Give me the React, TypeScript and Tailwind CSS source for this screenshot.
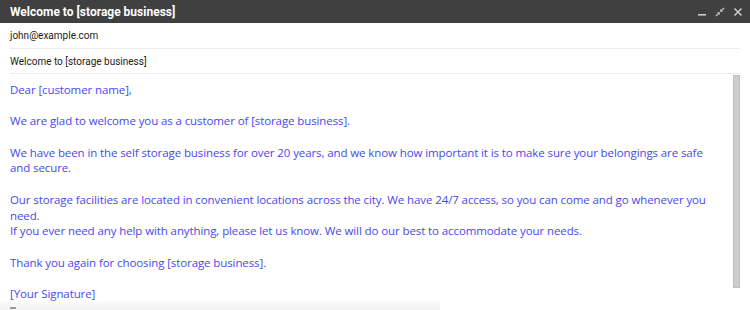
import React from "react";

const lines: (string | null)[] = [
  "Dear [customer name],",
  null,
  "We are glad to welcome you as a customer of [storage business].",
  null,
  "We have been in the self storage business for over 20 years, and we know how important it is to make sure your belongings are safe and secure.",
  null,
  "Our storage facilities are located in convenient locations across the city. We have 24/7 access, so you can come and go whenever you need.",
  "If you ever need any help with anything, please let us know. We will do our best to accommodate your needs.",
  null,
  "Thank you again for choosing [storage business].",
  null,
  "[Your Signature]",
];

export default function App() {
  return (
    <div className="flex h-[310px] w-[750px] flex-col overflow-hidden bg-white font-['Roboto',sans-serif]">
      {/* title bar */}
      <div className="flex h-[23px] shrink-0 items-center justify-between bg-[#404040] pl-[10px] pr-[7px]">
        <span className="text-[12px] font-bold text-white">Welcome to [storage business]</span>
        <div className="flex items-center gap-[8px] text-[#c8c8c8]">
          <svg width="10" height="10" viewBox="0 0 10 10">
            <rect x="1" y="7" width="8" height="1.6" fill="currentColor" />
          </svg>
          <svg width="10" height="10" viewBox="0 0 10 10" fill="currentColor">
            <path d="M9 1 L6.2 3.8" stroke="currentColor" strokeWidth="1.2" />
            <path d="M5.2 1.8 L5.2 4.8 L8.2 4.8 Z" />
            <path d="M1 9 L3.8 6.2" stroke="currentColor" strokeWidth="1.2" />
            <path d="M4.8 8.2 L4.8 5.2 L1.8 5.2 Z" />
          </svg>
          <svg width="10" height="10" viewBox="0 0 10 10">
            <path d="M1.5 1.5 L8.5 8.5 M8.5 1.5 L1.5 8.5" stroke="currentColor" strokeWidth="1.6" />
          </svg>
        </div>
      </div>

      {/* fields */}
      <div className="shrink-0 px-[10px]">
        <div className="flex h-[26px] items-center border-b border-[#ececec] text-[10px] text-[#222]">
          john@example.com
        </div>
        <div className="flex h-[25px] items-center border-b border-[#ececec] text-[10px] text-[#222]">
          Welcome to [storage business]
        </div>
      </div>

      {/* body */}
      <div className="relative flex min-h-0 flex-1">
        <div className="w-[725px] pl-[10px] pt-[8px] font-['Open_Sans',sans-serif] text-[11.5px] leading-[15.7px] tracking-[-0.1px] text-[#4848ee]">
          {lines.map((l, i) => (l === null ? <div key={i} className="h-[15.7px]" /> : <div key={i}>{l}</div>))}
        </div>
        <div className="ml-[8px] mt-[1px] h-[213px] w-[7px] border border-[#bdbdbd] bg-[#cdcdcd]" />
        <div className="absolute bottom-0 left-0 h-[11px] w-[440px] bg-gradient-to-b from-transparent to-[#f1f1f1]" />
        <div className="absolute bottom-[1px] left-[10px] h-[2px] w-[6px] bg-[#999]" />
      </div>
    </div>
  );
}
